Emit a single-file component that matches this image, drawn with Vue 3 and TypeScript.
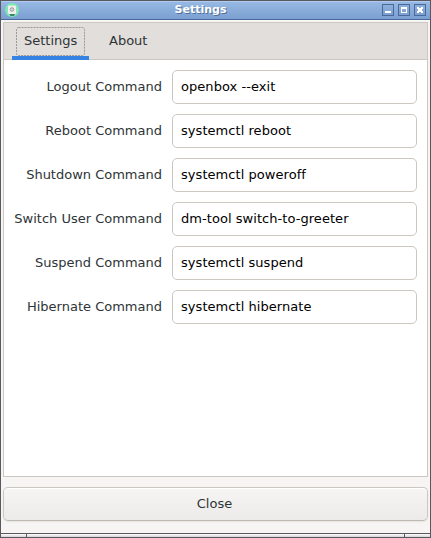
<script setup lang="ts">
import { ref } from 'vue'

interface Field {
  id: string
  label: string
  value: string
}

const tabs = ['Settings', 'About']
const activeTab = ref('Settings')
const fields = ref<Field[]>([
  { id: 'logout', label: 'Logout Command', value: 'openbox --exit' },
  { id: 'reboot', label: 'Reboot Command', value: 'systemctl reboot' },
  { id: 'shutdown', label: 'Shutdown Command', value: 'systemctl poweroff' },
  { id: 'switch', label: 'Switch User Command', value: 'dm-tool switch-to-greeter' },
  { id: 'suspend', label: 'Suspend Command', value: 'systemctl suspend' },
  { id: 'hibernate', label: 'Hibernate Command', value: 'systemctl hibernate' },
])
</script>

<template>
  <div class="window">
    <header class="titlebar">
      <svg class="app-icon" width="14" height="14" viewBox="0 0 14 14">
        <circle cx="7" cy="7" r="6.9" fill="#7deab5" />
        <rect x="3" y="2.5" width="8" height="8.5" rx="1" fill="#f4eeee" />
        <circle cx="7" cy="6.5" r="1.8" fill="#d0d0d0" stroke="#999f9d" />
        <path d="M4.5 11.2h5.5l-1 1.5H5.5z" fill="#245f50" />
      </svg>
      <h1 class="title">Settings</h1>
      <div class="controls">
        <button class="control" aria-label="Minimize">
          <svg width="10" height="10" shape-rendering="crispEdges"><path d="M2 6h6v2H2z" fill="#fff" /></svg>
        </button>
        <button class="control" aria-label="Maximize">
          <svg width="10" height="10" shape-rendering="crispEdges"><path d="M2 2h6v6H2zM3 4v3h4V4z" fill="#fff" fill-rule="evenodd" /></svg>
        </button>
        <button class="control" aria-label="Close window">
          <svg width="10" height="10" shape-rendering="crispEdges"><path d="M2 2h2v1h2V2h2v2H7v2h1v2H6V7H4v1H2V6h1V4H2z" fill="#fff" /></svg>
        </button>
      </div>
    </header>
    <main class="body">
      <section class="notebook">
        <nav class="tabs">
          <button v-for="tab in tabs" :key="tab" class="tab" :class="{ active: tab === activeTab }" @click="activeTab = tab">
            <span class="tab-label">{{ tab }}</span>
            <svg v-if="tab === activeTab" class="focus-ring"><rect x="0.5" y="0.5" rx="2" /></svg>
          </button>
        </nav>
        <form class="form">
          <template v-for="field in fields" :key="field.id">
            <label class="label" :for="field.id">{{ field.label }}</label>
            <input :id="field.id" v-model="field.value" class="entry" type="text" spellcheck="false" />
          </template>
        </form>
      </section>
      <button class="close">Close</button>
    </main>
    <footer class="handle"><i class="grip"></i><i class="bar"></i><i class="grip"></i></footer>
  </div>
</template>

<style>
body {
  margin: 0;
  overflow: hidden;
}
</style>

<style scoped>
* {
  box-sizing: border-box;
}

.window {
  display: flex;
  flex-direction: column;
  width: 431px;
  height: 538px;
  border: 1px solid #57595e;
  background: #f6f5f4;
  color: #2e3436;
  font: 13px/16px "DejaVu Sans", sans-serif;
}

button,
input {
  margin: 0;
  font: inherit;
  color: inherit;
}

.titlebar {
  display: grid;
  grid-template-columns: 21px 1fr 48px;
  height: 19px;
  padding-left: 3px;
  border-top: 1px solid #b0caf0;
  border-bottom: 1px solid #49699b;
  background: linear-gradient(#97b8e3, #7a9fd0);
}

.app-icon {
  display: block;
  margin: 1px 0 0 1px;
}

.title {
  margin: 0;
  padding-right: 6px;
  color: #fff;
  font-size: 11px;
  font-weight: bold;
  line-height: 15px;
  text-align: center;
  text-shadow: 1px 1px 0 #4f6f99;
}

.controls {
  display: flex;
  gap: 4px;
  padding-top: 2px;
}

.control {
  width: 12px;
  height: 12px;
  padding: 0;
  border: 1px solid #49699b;
  background: linear-gradient(#8fb0dc, #7b9fd0);
}

.control svg {
  display: block;
}

.body {
  display: flex;
  flex: 1;
  flex-direction: column;
  gap: 10px;
  padding: 2px 2px 12px;
}

.notebook {
  flex: 1;
  border: 1px solid #cdc7c2;
  background: #fff;
}

.tabs {
  display: flex;
  gap: 8px;
  height: 37px;
  padding-left: 8px;
  border-bottom: 1px solid #cdc7c2;
  background: #e1dedb;
}

.tab {
  position: relative;
  height: 37px;
  padding: 4px 12px 0;
  border: 0;
  border-bottom: 4px solid transparent;
  background: none;
}

.tab.active {
  width: 77px;
  border-bottom-color: #3584e4;
}

.tab-label {
  display: block;
  height: 29px;
  padding: 6px 0;
}

.focus-ring {
  position: absolute;
  top: 4px;
  left: 4px;
  width: 69px;
  height: 29px;
}

.focus-ring rect {
  width: 68px;
  height: 28px;
  fill: none;
  stroke: #979997;
  stroke-dasharray: 2 1;
}

.form {
  display: grid;
  grid-template-columns: 148px 245px;
  grid-auto-rows: 34px;
  gap: 10px;
  padding: 10px;
}

.label {
  align-self: center;
  text-align: right;
  white-space: nowrap;
}

.entry {
  min-width: 0;
  padding: 0 8px;
  border: 1px solid #cdc7c2;
  border-radius: 5px;
  outline: 0;
  background: #fff;
  color: #000;
  letter-spacing: 0.05px;
}

.close {
  height: 34px;
  padding: 0 2px 0 0;
  border: 1px solid #cdc7c2;
  border-bottom-color: #bfb8b1;
  border-radius: 5px;
  background: linear-gradient(#f6f5f4, #edebe9);
  box-shadow: inset 0 1px #fff, 0 1px 2px #00000012;
}

.handle {
  display: flex;
  gap: 1px;
  height: 4px;
  border-top: 1px solid #57595e;
  background: #57595e;
}

.grip {
  width: 25px;
  background: linear-gradient(#fff, #d3d3d6);
}

.bar {
  flex: 1;
  background: linear-gradient(#fff, #d3d3d6);
}
</style>
